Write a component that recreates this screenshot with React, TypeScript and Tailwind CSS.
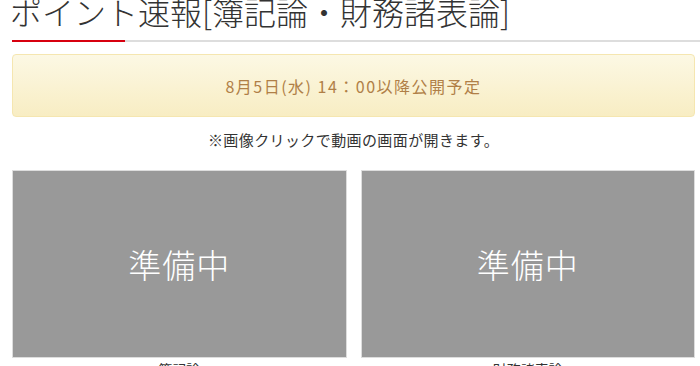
import React from 'react';

const font = { fontFamily: '"Noto Sans CJK JP", "Noto Sans", sans-serif' };

const Thumb: React.FC<{ label: string }> = ({ label }) => (
    <div className="flex flex-col items-center">
        <div className="w-full h-[188px] bg-[#999999] border border-[#dddddd] flex items-center justify-center">
            <span className="text-white text-[33px] leading-none tracking-[1px] font-light">準備中</span>
        </div>
        <p className="text-[14px] leading-[20px] text-[#333] mt-[1px]">{label}</p>
    </div>
);

export default function App() {
    return (
        <div className="w-[700px] h-[366px] overflow-hidden bg-white" style={font}>
            <div className="pl-[12px] pr-[5px]">
                <h1 className="text-[32px] leading-none text-[#333] font-light -ml-[2px] mt-[-5px] whitespace-nowrap">
                    ポイント速報[簿記論・財務諸表論]
                </h1>
                <div className="flex mt-[13px] -mr-[5px]">
                    <div className="w-[113px] h-[2px] bg-[#d7000f]" />
                    <div className="flex-1 h-[2px] bg-[#dddddd]" />
                </div>

                <div className="mt-[12px] h-[63px] rounded-[4px] border border-[#f5e6b0] bg-gradient-to-b from-[#fcf8e4] to-[#f8edc3] flex items-center justify-center">
                    <span className="text-[16px] text-[#b07f47] tracking-[1.5px]">8月5日(水) 14：00以降公開予定</span>
                </div>

                <p className="text-center text-[15px] text-[#333] mt-[13px] leading-[20px] tracking-[0.4px]">
                    ※画像クリックで動画の画面が開きます。
                </p>

                <div className="grid grid-cols-2 gap-[14px] mt-[20px]">
                    <Thumb label="簿記論" />
                    <Thumb label="財務諸表論" />
                </div>
            </div>
        </div>
    );
}
